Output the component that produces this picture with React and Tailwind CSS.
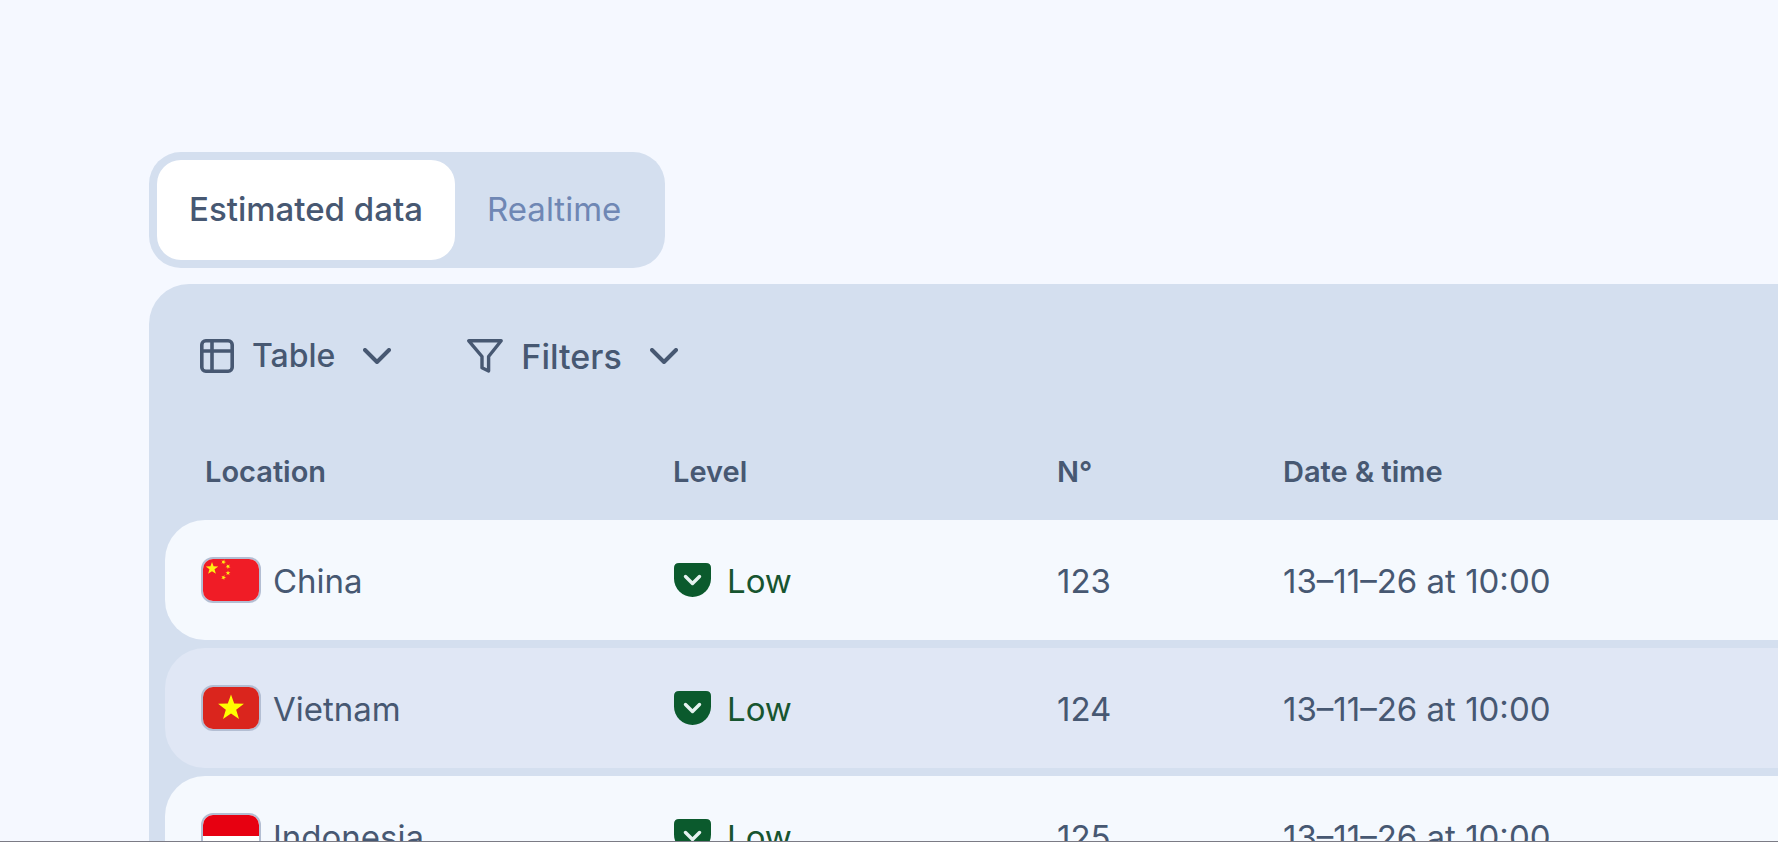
import React, { useState } from 'react';

const STAR = 'M0 -10 L2.35 -3.24 L9.51 -3.09 L3.8 1.24 L5.88 8.09 L0 4 L-5.88 8.09 L-3.8 1.24 L-9.51 -3.09 L-2.35 -3.24 Z';

const rows = [
  { id: 123, country: 'China', level: 'Low', date: '13–11–26 at 10:00' },
  { id: 124, country: 'Vietnam', level: 'Low', date: '13–11–26 at 10:00' },
  { id: 125, country: 'Indonesia', level: 'Low', date: '13–11–26 at 10:00' },
];

const Flag = ({ country }) => (
  <span className="block w-[60px] h-[46px] shrink-0 rounded-xl border-2 border-[#b3bed3] overflow-hidden">
    <svg viewBox="0 0 56 42" className="block w-full h-full">
      {country === 'China' && (
        <>
          <rect width="56" height="42" fill="#f01c26" />
          <g fill="#ffef12">
            <path d={STAR} transform="translate(9 9.5) scale(0.66)" />
            <path d={STAR} transform="translate(20.5 3) rotate(20) scale(0.26)" />
            <path d={STAR} transform="translate(25 7.5) rotate(40) scale(0.26)" />
            <path d={STAR} transform="translate(25 14) scale(0.26)" />
            <path d={STAR} transform="translate(20.5 18.5) rotate(20) scale(0.26)" />
          </g>
        </>
      )}
      {country === 'Vietnam' && (
        <>
          <rect width="56" height="42" fill="#da251d" />
          <path d={STAR} transform="translate(28 21) scale(1.36)" fill="#ffff00" />
        </>
      )}
      {country === 'Indonesia' && (
        <>
          <rect width="56" height="42" fill="#fff" />
          <rect width="56" height="21" fill="#e70011" />
        </>
      )}
    </svg>
  </span>
);

const TableIcon = () => (
  <svg viewBox="0 0 34 34" className="w-[34px] h-[34px]" fill="none" stroke="currentColor" strokeWidth="3.6">
    <rect x="1.8" y="1.8" width="30.4" height="30.4" rx="4" />
    <path d="M1.8 12H32.2M12 1.8V32.2" />
  </svg>
);

const FilterIcon = () => (
  <svg viewBox="0 0 36 34" className="w-9 h-[34px]" fill="none" stroke="currentColor" strokeWidth="3.4" strokeLinejoin="round">
    <path d="M1.8 1.8H34.2L21.6 17.5V32L15 28.8V17.5Z" />
  </svg>
);

const Chevron = () => (
  <svg viewBox="0 0 28 16" className="w-7 h-4" fill="none" stroke="currentColor" strokeWidth="4" strokeLinecap="round" strokeLinejoin="round">
    <path d="M2 2L14 14L26 2" />
  </svg>
);

const LowIcon = () => (
  <svg viewBox="0 0 37 34" className="w-[37px] h-[34px] shrink-0">
    <path d="M5 0H32Q37 0 37 5V15.5A18.5 18.5 0 0 1 0 15.5V5Q0 0 5 0Z" fill="#0b5a2d" />
    <path d="M11.5 13.5L18.5 20.5L25.5 13.5" fill="none" stroke="#e6f2f0" strokeWidth="3.4" strokeLinecap="round" strokeLinejoin="round" />
  </svg>
);

const App = () => {
  const [tab, setTab] = useState('estimated');

  const tabClass = (name) =>
    tab === name ? 'bg-white text-[#475872] font-medium' : 'text-[#6f87b4]';

  return (
    <div className="h-screen overflow-hidden flex flex-col bg-[#f5f8ff] border-b border-[#7b7b85] font-['Inter',sans-serif] text-[#475872] pt-[152px] pl-[149px]">

      {/* TABS */}
      <div className="self-start shrink-0 flex bg-[#d4dfef] rounded-[32px] p-2">
        <button
          type="button"
          onClick={() => setTab('estimated')}
          className={`h-[100px] px-8 rounded-3xl text-[33px] ${tabClass('estimated')}`}
        >
          Estimated data
        </button>
        <button
          type="button"
          onClick={() => setTab('realtime')}
          className={`h-[100px] pl-8 pr-9 rounded-3xl text-[33px] ${tabClass('realtime')}`}
        >
          Realtime
        </button>
      </div>

      {/* DATA PANEL */}
      <div className="mt-4 shrink-0 bg-[#d4dfef] rounded-tl-[40px] pl-4 pb-4">

        {/* TOOLBAR */}
        <div className="flex items-center h-36 pl-[35px] gap-[76px]">
          <button type="button" className="flex items-center gap-[18px] text-[32px] font-medium">
            <TableIcon />
            Table
            <span className="pl-[10px]"><Chevron /></span>
          </button>
          <button type="button" className="flex items-center gap-[18px] text-[34px] font-medium">
            <FilterIcon />
            Filters
            <span className="pl-[10px]"><Chevron /></span>
          </button>
        </div>

        <table className="w-full table-fixed border-separate border-spacing-x-0 border-spacing-y-2">
          <thead>
            <tr className="h-[76px] text-left text-[29px]">
              <th className="w-[508px] pl-10 pb-1 font-semibold">Location</th>
              <th className="w-[384px] pb-1 font-semibold">Level</th>
              <th className="w-[226px] pb-1 font-semibold">N°</th>
              <th className="pb-1 font-semibold">Date &amp; time</th>
            </tr>
          </thead>
          <tbody className="text-[33px]">
            {rows.map((row) => (
              <tr key={row.id} className="h-[120px] bg-[#f5f9fe] even:bg-[#e0e7f5]">
                <td className="rounded-l-[40px] pl-9">
                  <div className="flex items-center gap-3">
                    <Flag country={row.country} />
                    <span className="pt-1">{row.country}</span>
                  </div>
                </td>
                <td>
                  <div className="flex items-center gap-4 pl-px text-[#17552f]">
                    <LowIcon />
                    <span className="pt-1">{row.level}</span>
                  </div>
                </td>
                <td className="pt-1">{row.id}</td>
                <td className="pt-1">{row.date}</td>
              </tr>
            ))}
          </tbody>
        </table>
      </div>
    </div>
  );
};

export default App;
